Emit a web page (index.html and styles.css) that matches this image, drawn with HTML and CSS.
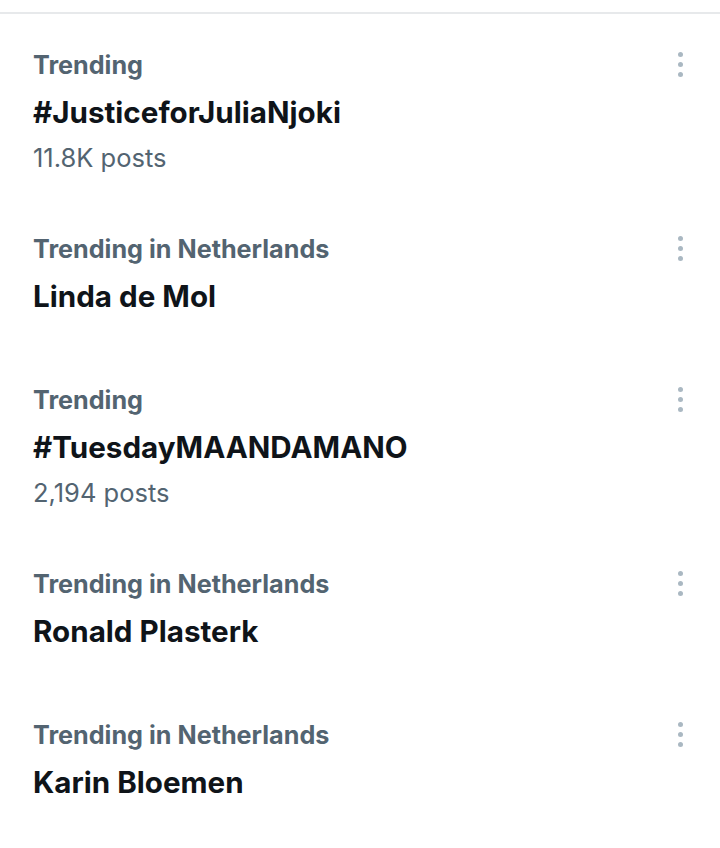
FILE: index.html
```html
<!DOCTYPE html>
<html>
<head>
<meta charset="utf-8">
<link rel="stylesheet" href="styles.css">
</head>
<body>
<div class="page">
  <div class="topline"></div>
  <ul class="list">
    <li class="item">
      <div class="text">
        <div class="meta">Trending</div>
        <div class="title">#JusticeforJuliaNjoki</div>
        <div class="count">11.8K posts</div>
      </div>
      <div class="more"><span></span><span></span><span></span></div>
    </li>
    <li class="item">
      <div class="text">
        <div class="meta">Trending in Netherlands</div>
        <div class="title">Linda de Mol</div>
      </div>
      <div class="more"><span></span><span></span><span></span></div>
    </li>
    <li class="item">
      <div class="text">
        <div class="meta">Trending</div>
        <div class="title">#TuesdayMAANDAMANO</div>
        <div class="count">2,194 posts</div>
      </div>
      <div class="more"><span></span><span></span><span></span></div>
    </li>
    <li class="item">
      <div class="text">
        <div class="meta">Trending in Netherlands</div>
        <div class="title">Ronald Plasterk</div>
      </div>
      <div class="more"><span></span><span></span><span></span></div>
    </li>
    <li class="item">
      <div class="text">
        <div class="meta">Trending in Netherlands</div>
        <div class="title">Karin Bloemen</div>
      </div>
      <div class="more"><span></span><span></span><span></span></div>
    </li>
  </ul>
</div>
</body>
</html>
```
FILE: styles.css
```css
* { box-sizing: border-box; }
html, body { margin: 0; padding: 0; background: #ffffff; }
body { font-family: Inter, Roboto, "Liberation Sans", sans-serif; }
.page { width: 720px; height: 848px; overflow: hidden; padding-top: 12px; }
.topline { height: 2px; background: #e7e9eb; }
.list { list-style: none; margin: 0; padding: 3px 0 0 0; }
.item { display: flex; justify-content: space-between; align-items: flex-start; padding: 30px 0 27px 33px; }
.text { display: flex; flex-direction: column; }
.meta { font-size: 25.2px; line-height: 36px; font-weight: 700; color: #536471; }
.title { font-size: 29.6px; line-height: 58px; font-weight: 700; color: #0f1419; }
.count { font-size: 25.5px; line-height: 33px; font-weight: 400; color: #536471; }
.more { width: 80px; display: flex; flex-direction: column; align-items: center; gap: 5px; padding-top: 5px; }
.more span { width: 5px; height: 5px; border-radius: 50%; background: #aab8c2; display: block; }
```
